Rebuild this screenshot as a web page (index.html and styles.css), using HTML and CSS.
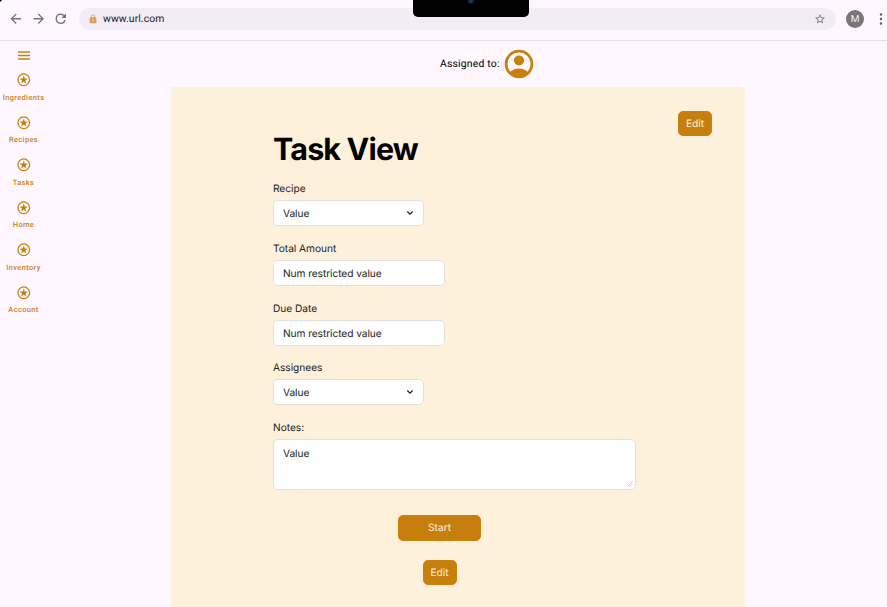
FILE: index.html
```html
<!DOCTYPE html>
<html lang="en">
<head>
<meta charset="utf-8">
<title>Task View</title>
<link rel="stylesheet" href="styles.css">
</head>
<body>
<svg width="0" height="0" class="defs" aria-hidden="true">
  <symbol id="star" viewBox="0 0 24 24"><path d="M12 5.600l1.700 4.500 4.700.2-3.700 2.900 1.300 4.600-4-2.600-4 2.600 1.300-4.600-3.700-2.900 4.700-.2zM12 2a10 10 0 1 0 0 20 10 10 0 0 0 0-20zm0 2a8 8 0 1 1 0 16 8 8 0 0 1 0-16z" fill-rule="evenodd"/></symbol>
  <symbol id="chevron" viewBox="0 0 8 6"><path d="M1.300 1.500 4 4.200 6.700 1.500" fill="none" stroke="#1e1e1e" stroke-width="1.200"/></symbol>
</svg>
<header class="browser">
  <svg class="tool" viewBox="0 0 24 24"><path d="M20 11H7.830l5.590-5.590L12 4l-8 8 8 8 1.410-1.410L7.830 13H20v-2z"/></svg>
  <svg class="tool" viewBox="0 0 24 24"><path d="M12 4l-1.410 1.410L16.170 11H4v2h12.170l-5.580 5.590L12 20l8-8-8-8z"/></svg>
  <svg class="tool" viewBox="0 0 24 24"><path d="M17.650 6.350A7.960 7.960 0 0 0 12 4a8 8 0 1 0 7.730 10h-2.080A6 6 0 1 1 12 6c1.660 0 3.140.69 4.220 1.780L13 11h7V4l-2.350 2.350z"/></svg>
  <div class="address">
    <svg class="lock" viewBox="0 0 24 24"><path d="M18 8h-1V6A5 5 0 0 0 7 6v2H6a2 2 0 0 0-2 2v10c0 1.100.9 2 2 2h12a2 2 0 0 0 2-2V10a2 2 0 0 0-2-2zm-6 9a2 2 0 1 1 0-4 2 2 0 0 1 0 4zM9 8V6a3 3 0 0 1 6 0v2z" fill-rule="evenodd"/></svg>
    <span>www.url.com</span>
    <svg class="bookmark" viewBox="0 0 24 24"><path d="M22 9.240l-7.190-.62L12 2 9.190 8.630 2 9.240l5.460 4.730L5.820 21 12 17.270 18.180 21l-1.630-7.030L22 9.240zM12 15.400l-3.760 2.270 1-4.280-3.320-2.880 4.380-.38L12 6.100l1.710 4.040 4.380.38-3.320 2.880 1 4.280L12 15.400z"/></svg>
  </div>
  <div class="profile">M</div>
  <svg class="more" viewBox="0 0 4 12"><circle cx="2" cy="1.500" r="1.200"/><circle cx="2" cy="6" r="1.200"/><circle cx="2" cy="10.500" r="1.200"/></svg>
  <div class="notch"><i></i></div>
</header>
<div class="layout">
  <nav class="rail">
    <svg class="menu" viewBox="0 0 12 9"><path d="M0 1h12M0 4.500h12M0 8h12" stroke="#ca8010" stroke-width="1.400"/></svg>
    <a><svg><use href="#star"/></svg>Ingredients</a>
    <a><svg><use href="#star"/></svg>Recipes</a>
    <a><svg><use href="#star"/></svg>Tasks</a>
    <a><svg><use href="#star"/></svg>Home</a>
    <a><svg><use href="#star"/></svg>Inventory</a>
    <a><svg><use href="#star"/></svg>Account</a>
  </nav>
  <main>
    <div class="assigned">
      <span>Assigned to:</span>
      <svg viewBox="0 0 30 30"><defs><clipPath id="face"><circle cx="15" cy="15" r="13"/></clipPath></defs><circle cx="15" cy="15" r="12.900" fill="none" stroke="#c8800c" stroke-width="2.800"/><circle cx="15" cy="11.500" r="5.100"/><ellipse cx="15" cy="27" rx="10.500" ry="7.500" clip-path="url(#face)"/></svg>
    </div>
    <section class="card">
      <div class="actions"><button class="btn">Edit</button></div>
      <div class="form">
        <h1>Task View</h1>
        <div class="field"><label>Recipe</label><div class="control select">Value<svg><use href="#chevron"/></svg></div></div>
        <div class="field"><label>Total Amount</label><div class="control">Num restricted value</div></div>
        <div class="field due"><label>Due Date</label><div class="control">Num restricted value</div></div>
        <div class="field"><label>Assignees</label><div class="control select">Value<svg><use href="#chevron"/></svg></div></div>
        <div class="field"><label>Notes:</label><div class="control notes">Value<svg viewBox="0 0 6 6"><path d="M.5 5.500l5-5M3 5.500l2.500-2.500" stroke="#b3b3b3" stroke-width=".7"/></svg></div></div>
      </div>
      <div class="footer"><button class="btn start">Start</button><button class="btn">Edit</button></div>
    </section>
  </main>
</div>
</body>
</html>
```

FILE: styles.css
```css
* { box-sizing: border-box; }
body {
  margin: 0;
  height: 607px;
  overflow: hidden;
  background: #fef7ff;
  font-family: Roboto, sans-serif;
  color: #1d1b20;
  text-rendering: geometricPrecision;
}
.defs { position: absolute; }
svg { display: block; flex: none; }

.browser {
  position: relative;
  display: flex;
  align-items: center;
  height: 41px;
  padding: 0 3px 3px 8px;
  border-bottom: 1px solid #e7e0e9;
  background: radial-gradient(circle at 4px 4px, transparent 4px, #000 4.500px) 0 0 / 4px 4px no-repeat;
}
.tool { width: 15.500px; height: 15.500px; margin-right: 7px; fill: #746e79; }
.address {
  display: flex;
  align-items: center;
  width: 757px;
  height: 22px;
  margin-left: 3.500px;
  padding: 0 10px 0 9px;
  border-radius: 11px;
  background: #f2ecf6;
  font-size: 10.400px;
  letter-spacing: .08px;
}
.lock { width: 10px; height: 10px; margin-right: 5px; fill: #daa04f; }
.bookmark { width: 12px; height: 12px; margin-left: auto; fill: #79747e; }
.profile {
  width: 18px;
  height: 18px;
  margin-left: 10px;
  border-radius: 50%;
  background: #79747e;
  color: #f4edf7;
  font-size: 10px;
  font-weight: 400;
  line-height: 19px;
  text-align: center;
}
.more { width: 4px; height: 12px; margin-left: 15px; fill: #625c66; }
.notch {
  position: absolute;
  top: 0;
  left: 413px;
  width: 116px;
  height: 17px;
  border-radius: 0 0 5px 5px;
  background: #000;
}
.notch i {
  display: block;
  width: 6px;
  height: 6px;
  margin: -2px auto 0;
  border-radius: 50%;
  background: radial-gradient(#17406b, #111c29 70%);
}

.layout { display: flex; height: 566px; }
.rail {
  display: flex;
  flex-direction: column;
  align-items: center;
  width: 47px;
  margin-right: 124px;
  padding-top: 10px;
}
.menu { width: 12px; height: 9px; margin-bottom: 12px; }
.rail a {
  display: flex;
  flex-direction: column;
  align-items: center;
  height: 42.500px;
  color: #ca8010;
  font-size: 7.400px;
  font-weight: 500;
  line-height: 10px;
  letter-spacing: .4px;
}
.rail a svg { width: 15.500px; height: 15.500px; margin-bottom: 5px; fill: #c8800c; }

main { width: 574px; }
.assigned {
  display: flex;
  align-items: center;
  height: 46px;
  padding-left: 269px;
  gap: 4.500px;
  font-size: 10.400px;
  letter-spacing: .2px;
  color: #000;
}
.assigned span { padding-bottom: 1px; }
.assigned svg { width: 30px; height: 30px; fill: #c8800c; }
.card {
  height: 520px;
  background: #fef1dc;
  font-family: Inter, sans-serif;
}
.actions { display: flex; justify-content: flex-end; height: 49px; padding: 24px 33px 0 0; }
.btn {
  width: 34px;
  height: 25px;
  padding: 1px 0 0;
  border: 1px solid #cb8110;
  border-radius: 5px;
  background: #c67f0c;
  color: #fef0db;
  font: 400 10.200px/1 Inter, sans-serif;
  text-rendering: inherit;
}
.form { padding-left: 102px; }
h1 {
  margin: -4px 0 14px;
  color: #000;
  font-size: 30.500px;
  font-weight: 700;
  line-height: 36px;
  letter-spacing: -.85px;
}
.field { margin-bottom: 16px; font-size: 10.200px; letter-spacing: -.08px; color: #1e1e1e; }
.due { margin-bottom: 15px; }
label { display: block; margin-bottom: 4px; height: 14px; line-height: 15px; letter-spacing: -.04px; }
.control {
  display: flex;
  align-items: center;
  width: 172px;
  height: 26px;
  padding: 1px 9px 0;
  border: 1px solid #e2e1e0;
  border-radius: 5px;
  background: #fff;
}
.select { width: 151px; justify-content: space-between; }
.select svg { width: 8px; height: 6px; margin-bottom: 1px; }
.notes {
  align-items: flex-start;
  justify-content: space-between;
  width: 363px;
  height: 51px;
  padding: 0 2px 2px 9px;
  line-height: 29px;
}
.notes svg { align-self: flex-end; width: 6px; height: 6px; }
.footer {
  display: flex;
  flex-direction: column;
  align-items: center;
  gap: 19px;
  width: 537px;
  padding-top: 9px;
}
.start { width: 83px; height: 26px; }
```
